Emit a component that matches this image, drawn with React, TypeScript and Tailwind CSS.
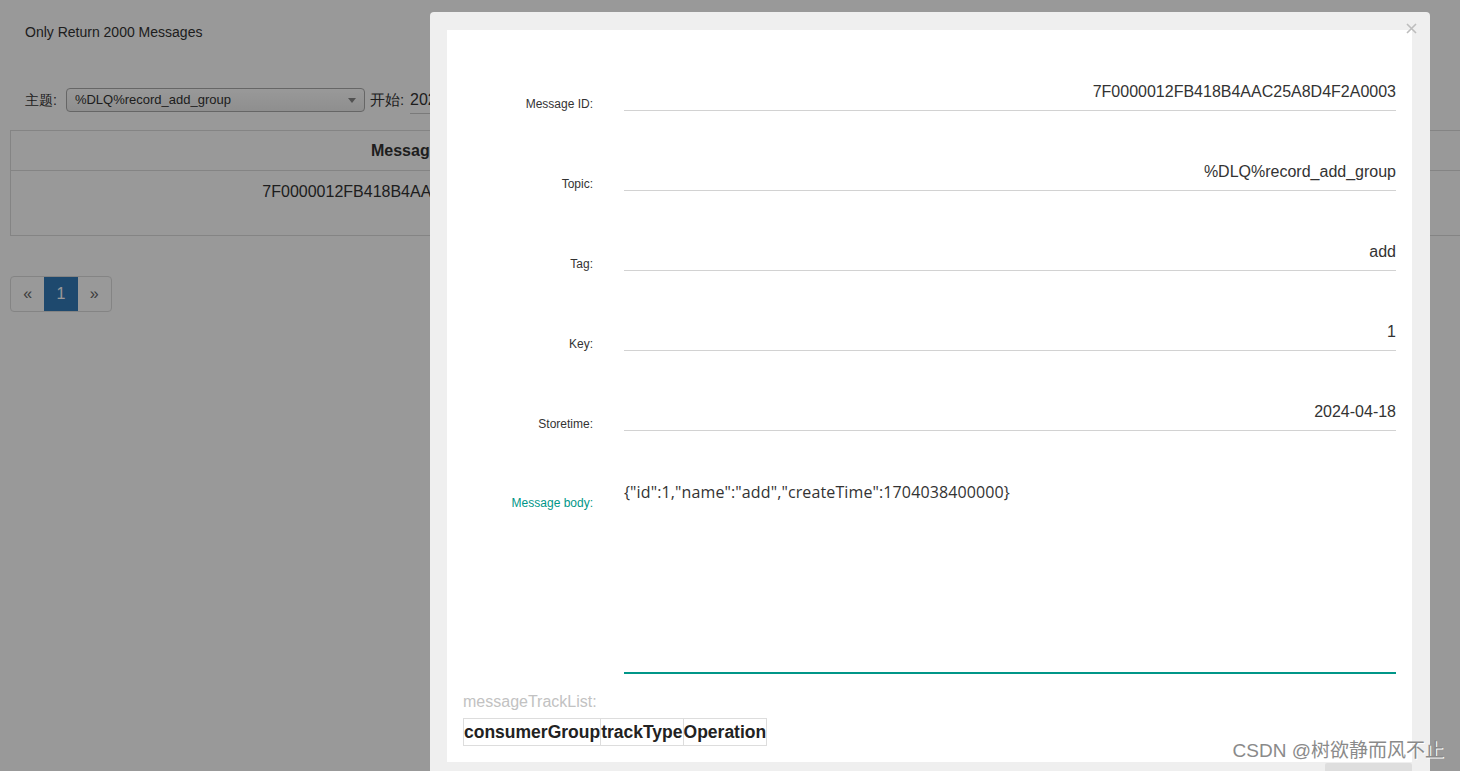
import React from "react";

const rows = [
  { label: "Message ID:", value: "7F0000012FB418B4AAC25A8D4F2A0003" },
  { label: "Topic:", value: "%DLQ%record_add_group" },
  { label: "Tag:", value: "add" },
  { label: "Key:", value: "1" },
  { label: "Storetime:", value: "2024-04-18" },
];

// --- halaman di belakang modal ---
const BackPage = () => (
  <div className="h-full w-full bg-white text-[#333] text-[14px]">
    <div className="pl-[25px] pt-[23px] leading-[18px]">Only Return 2000 Messages</div>
    <div className="flex items-center pl-[25px] mt-[46px] h-[26px]">
      <span>主题:</span>
      <div className="ml-[9px] w-[299px] h-[24px] rounded-[4px] border border-[#aaa] bg-gradient-to-b from-white to-[#eee] flex items-center px-[8px] text-[13px]">
        <span className="flex-1">%DLQ%record_add_group</span>
        <span className="w-0 h-0 border-l-[4px] border-r-[4px] border-t-[5px] border-l-transparent border-r-transparent border-t-[#888]"></span>
      </div>
      <span className="ml-[5px] text-[15px]">开始:</span>
      <div className="ml-[6px] w-[300px] border-b border-[#ccc] text-[16px] leading-[26px]">2024-04-18</div>
    </div>
    <div className="ml-[10px] w-[1500px] mt-[17px] border border-[#ddd]">
      <div className="flex h-[40px] items-center border-b border-[#ddd] font-bold text-[16px]">
        <div className="w-[808px] text-center">Message ID</div>
        <div className="flex-1 text-center">Tag</div>
      </div>
      <div className="flex h-[64px] items-start pt-[9px] text-[16px]">
        <div className="w-[806px] text-center">7F0000012FB418B4AAC25A8D4F2A0003</div>
        <div className="flex-1 text-center">add</div>
      </div>
    </div>
    <div className="ml-[10px] mt-[40px] flex h-[36px] w-[102px] rounded-[4px] border border-[#ddd] text-[16px]">
      <div className="w-[34px] flex items-center justify-center text-[#666]">«</div>
      <div className="w-[34px] flex items-center justify-center bg-[#337ab7] text-white">1</div>
      <div className="w-[34px] flex items-center justify-center text-[#666]">»</div>
    </div>
  </div>
);

export default function App() {
  return (
    <div className="relative w-[1460px] h-[771px] overflow-hidden font-['Liberation_Sans',Arial,sans-serif]">
      <BackPage />
      <div className="absolute inset-0 bg-black/40"></div>

      {/* MODAL */}
      <div className="absolute left-[430px] top-[12px] w-[1000px] h-[800px] rounded-[4px] bg-[#efefef] pt-[18px] pl-[17px] pr-[18px]">
        <svg className="absolute right-[13px] top-[11px]" width="11" height="11" viewBox="0 0 11 11">
          <path d="M1 1 L10 10 M10 1 L1 10" stroke="#bdbdbd" strokeWidth="1.6" />
        </svg>

        <div className="bg-white h-[732px] pr-[16px] pt-[1px]">
          {rows.map((r) => (
            <div key={r.label} className="flex items-end h-[80px]">
              <div className="w-[146px] shrink-0 text-right text-[12px] leading-[14px] text-[#333]">{r.label}</div>
              <div className="ml-[31px] flex-1 border-b border-[#d2d2d2] text-right text-[16px] leading-[20px] pb-[8px] text-[#333]">
                {r.value}
              </div>
            </div>
          ))}

          <div className="flex items-start mt-[46px]">
            <div className="w-[146px] shrink-0 text-right text-[12px] leading-[14px] text-[#009688] mt-[19px]">Message body:</div>
            <div className="ml-[31px] flex-1 h-[197px] border-b-2 border-[#009688] pt-[5px] text-[16px] leading-[20px] tracking-[0.12px] text-[#333] font-['Open_Sans',sans-serif]">
              {'{"id":1,"name":"add","createTime":1704038400000}'}
            </div>
          </div>

          <div className="pl-[16px] mt-[18px] text-[16px] leading-[20px] text-[#c2c2c2]">messageTrackList:</div>
          <div className="pl-[16px] mt-[6px]">
            <table className="border-collapse text-[17.5px] font-bold text-[#222]">
              <thead>
                <tr>
                  <th className="border border-[#ddd] px-0 leading-[26px] font-bold">consumerGroup</th>
                  <th className="border border-[#ddd] px-0 leading-[26px] font-bold">trackType</th>
                  <th className="border border-[#ddd] px-0 leading-[26px] font-bold">Operation</th>
                </tr>
              </thead>
            </table>
          </div>
        </div>

        <div className="flex justify-end">
          <div className="mt-[1px] w-[87px] h-[30px] rounded-[2px] bg-[#dedede]"></div>
        </div>
      </div>

      <div className="absolute right-[16px] top-[739px] text-[19px] leading-[24px] text-[#8a8a8a] [text-shadow:1px_1px_0_#fff] font-['Liberation_Sans','Noto_Sans_CJK_SC',sans-serif]">
        CSDN @树欲静而风不止
      </div>
    </div>
  );
}
